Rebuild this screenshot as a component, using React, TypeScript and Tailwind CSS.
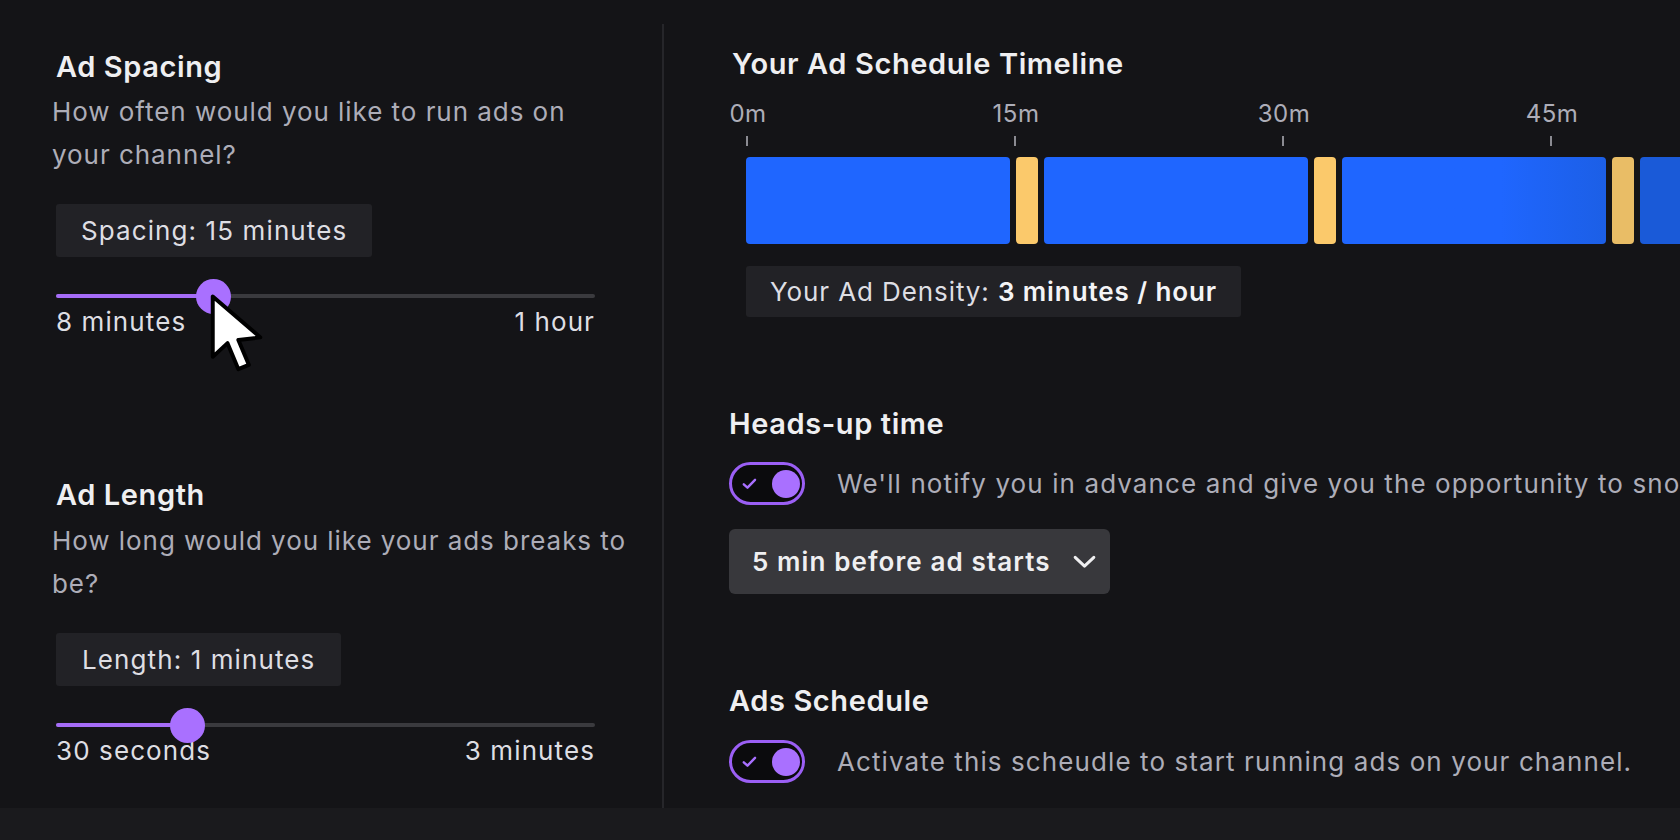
import React from "react";

function Cursor() {
  return (
    <svg
      className="absolute left-[153px] top-[7px] w-[58px] h-[83px] pointer-events-none"
      viewBox="-1 -1 16 23"
    >
      <path
        d="M0 0 L0 16.7 L4.1 12.9 L7.1 20.1 L10 18.9 L7.1 12 L13.2 11.3 Z"
        fill="#ffffff"
        stroke="#000000"
        strokeWidth="1.1"
        strokeLinejoin="round"
      />
    </svg>
  );
}

function Slider({
  fillClass,
  thumbClass,
  min,
  max,
  cursor,
}: {
  fillClass: string;
  thumbClass: string;
  min: string;
  max: string;
  cursor?: boolean;
}) {
  return (
    <div className="w-[539px]">
      <div className="relative h-[20px] flex items-center">
        <div className="relative h-[4px] w-full rounded-full bg-[#3a3a3e]">
          <div className={`absolute left-0 top-0 h-full rounded-full bg-[#a56cf7] ${fillClass}`} />
        </div>
        <div className={`absolute top-[-7.5px] w-[35px] h-[35px] rounded-full bg-[#a970ff] ${thumbClass}`} />
        {cursor && <Cursor />}
      </div>
      <div className="mt-[1px] flex justify-between text-[26px] leading-[29px] tracking-[1.1px] text-[#dedee3]">
        <span>{min}</span>
        <span>{max}</span>
      </div>
    </div>
  );
}

function Toggle() {
  return (
    <div className="w-[76px] h-[43px] shrink-0 rounded-full border-[3.5px] border-[#9b5ff5] bg-[#0b0b0d] flex items-center justify-between pl-[10px] pr-[2.5px]">
      <svg viewBox="0 0 16 13" className="w-[15px] h-[12px]">
        <path d="M1.8 6.8 L5.8 10.5 L14 2" fill="none" stroke="#a970ff" strokeWidth="2.6" strokeLinecap="round" strokeLinejoin="round" />
      </svg>
      <div className="w-[28px] h-[28px] rounded-full bg-[#a970ff]" />
    </div>
  );
}

const ticks = ["0m", "15m", "30m", "45m"];

export default function App() {
  return (
    <div className="w-[1680px] h-[840px] overflow-hidden bg-[#141417] font-[Inter,sans-serif] flex flex-col">
      <div className="flex h-[808px]">
        {/* Left column */}
        <div className="w-[662px] shrink-0 pl-[56px] pt-[50px]">
          <section>
            <h2 className="text-[29px] leading-[34px] tracking-[0.6px] font-semibold text-[#efeff1]">Ad Spacing</h2>
            <p className="mt-[7px] -ml-[4px] text-[26px] leading-[42.5px] text-[#adadb8] tracking-[0.95px]">
              How often would you like to run ads on
              <br />
              your channel?
            </p>
            <div className="mt-[28px] inline-flex h-[53px] items-center px-[25px] rounded-[3px] bg-[#222226] text-[26px] tracking-[1.1px] text-[#dedee3]">
              Spacing: 15 minutes
            </div>
            <div className="mt-[29px]">
              <Slider fillClass="w-[157px]" thumbClass="left-[139.5px]" min="8 minutes" max="1 hour" cursor />
            </div>
          </section>

          <section className="mt-[142px]">
            <h2 className="text-[29px] leading-[34px] tracking-[0.6px] font-semibold text-[#efeff1]">Ad Length</h2>
            <p className="mt-[8px] -ml-[4px] text-[26px] leading-[42.5px] text-[#adadb8] tracking-[0.95px]">
              How long would you like your ads breaks to
              <br />
              be?
            </p>
            <div className="mt-[28px] inline-flex h-[53px] items-center px-[26px] rounded-[3px] bg-[#222226] text-[26px] tracking-[1.1px] text-[#dedee3]">
              Length: 1 minutes
            </div>
            <div className="mt-[29px]">
              <Slider fillClass="w-[132px]" thumbClass="left-[114px]" min="30 seconds" max="3 minutes" />
            </div>
          </section>
        </div>

        {/* Divider */}
        <div className="w-[2px] shrink-0 mt-[24px] bg-[#26262a]" />

        {/* Right column */}
        <div className="pl-[65px] pt-[47px] whitespace-nowrap">
          <h2 className="ml-[3px] text-[29px] leading-[34px] tracking-[0.6px] font-semibold text-[#efeff1]">Your Ad Schedule Timeline</h2>

          <div className="ml-[17px] mt-[20px]">
            <div className="flex h-[26px]">
              {ticks.map((t) => (
                <div key={t} className="relative w-[268px] shrink-0">
                  <span className="absolute left-[2px] -translate-x-1/2 text-[24px] leading-[26px] tracking-[0.5px] text-[#adadb8]">{t}</span>
                </div>
              ))}
            </div>
            <div className="flex mt-[9px] h-[10px]">
              {ticks.map((t) => (
                <div key={t} className="w-[268px] shrink-0">
                  <div className="w-[2px] h-[10px] bg-[#8b8b92]" />
                </div>
              ))}
            </div>
            <div className="mt-[11px] flex gap-[6px] h-[87px]">
              <div className="w-[264px] shrink-0 rounded-[4px] bg-[#1f66ff]" />
              <div className="w-[22px] shrink-0 rounded-[4px] bg-[#fbc96b]" />
              <div className="w-[264px] shrink-0 rounded-[4px] bg-[#1f66ff]" />
              <div className="w-[22px] shrink-0 rounded-[4px] bg-[#fbc96b]" />
              <div className="w-[264px] shrink-0 rounded-[4px] bg-gradient-to-r from-[#1f66ff] from-60% to-[#1c5fe6]" />
              <div className="w-[22px] shrink-0 rounded-[4px] bg-[#e9bd66]" />
              <div className="w-[264px] shrink-0 rounded-[4px] bg-[#1a5ad8]" />
            </div>
            <div className="mt-[22px] inline-flex h-[51px] items-center px-[24px] rounded-[3px] bg-[#222226] text-[26px] tracking-[0.9px] text-[#dedee3]">
              Your Ad Density:&nbsp;<span className="font-semibold text-[#f4f4f6]">3 minutes / hour</span>
            </div>
          </div>

          <h2 className="mt-[90px] text-[29px] leading-[34px] tracking-[0.6px] font-semibold text-[#efeff1]">Heads-up time</h2>
          <div className="mt-[21px] flex items-center gap-[32px]">
            <Toggle />
            <span className="text-[26px] text-[#adadb8] tracking-[1.1px]">
              We'll notify you in advance and give you the opportunity to snooze your ads.
            </span>
          </div>
          <div className="mt-[24px] inline-flex h-[65px] w-[381px] items-center justify-between pl-[23px] pr-[13px] rounded-[6px] bg-[#38383c]">
            <span className="text-[26px] tracking-[1.1px] font-semibold text-[#efeff1]">5 min before ad starts</span>
            <svg viewBox="0 0 26 15" className="w-[25px] h-[14px]">
              <path d="M3 2.5 L13 12 L23 2.5" fill="none" stroke="#efeff1" strokeWidth="3.2" strokeLinecap="round" strokeLinejoin="round" />
            </svg>
          </div>

          <h2 className="mt-[90px] text-[29px] leading-[34px] tracking-[0.6px] font-semibold text-[#efeff1]">Ads Schedule</h2>
          <div className="mt-[22px] flex items-center gap-[32px]">
            <Toggle />
            <span className="text-[26px] text-[#adadb8] tracking-[1.1px]">
              Activate this scheudle to start running ads on your channel.
            </span>
          </div>
        </div>
      </div>
      <div className="h-[32px] bg-[#1a1a1d]" />
    </div>
  );
}
